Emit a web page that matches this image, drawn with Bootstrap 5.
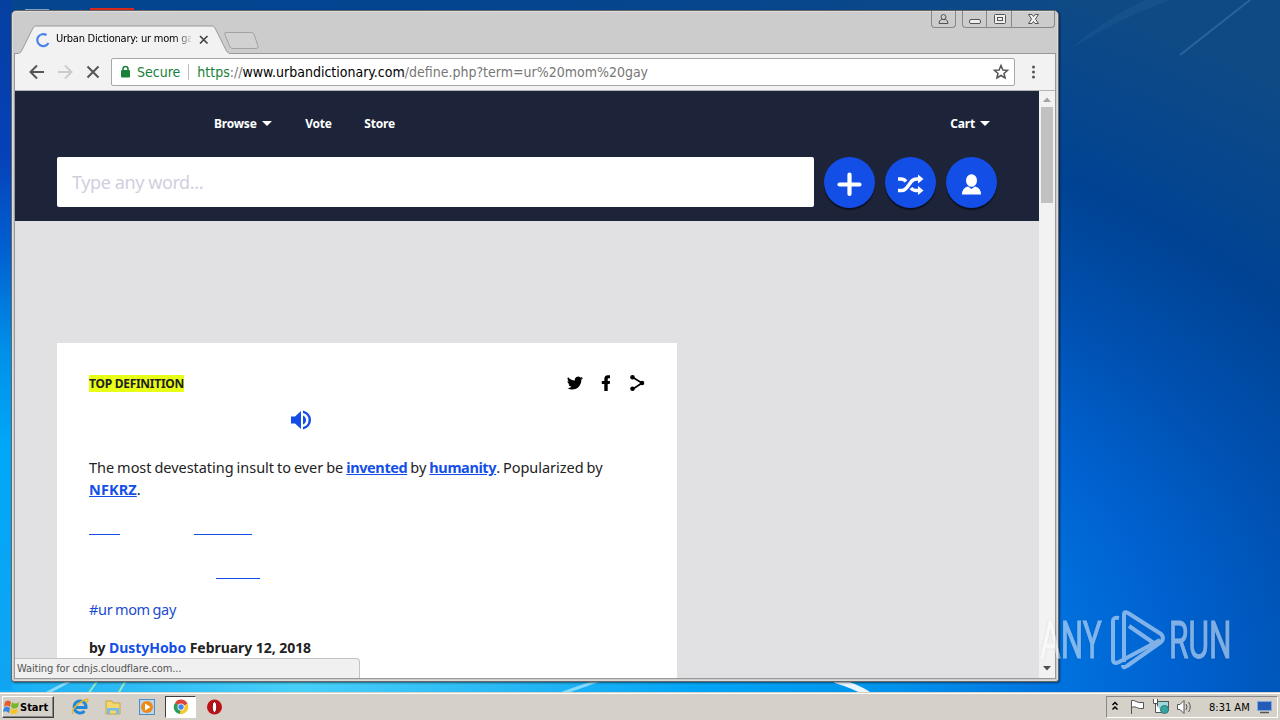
<!DOCTYPE html>
<html lang="en">
<head>
  <meta charset="UTF-8">
  <meta name="viewport" content="width=device-width, initial-scale=1.0">
  <title>Urban Dictionary: ur mom gay</title>
  <link href="https://cdn.jsdelivr.net/npm/bootstrap@5.3.0/dist/css/bootstrap.min.css" rel="stylesheet">
  <style>
    body {
      width: 1280px;
      height: 720px;
      overflow: hidden;
      font-family: "Noto Sans", "Open Sans", sans-serif;
      color: #222;
    }
    svg { display: block; flex: none; }
    .ui { font-family: "DejaVu Sans Condensed", "DejaVu Sans", sans-serif; white-space: nowrap; }
    .desktop {
      height: 720px;
      background:
        linear-gradient(#0540a0 0, #0640b8 150px, #0060d0 250px, #0090e8 350px, #00a8f8 450px, #10a4f2 690px) 0 0 / 12px 690px no-repeat,
        radial-gradient(ellipse 1150px 620px at 300px 690px, #48d0f8 0, #28b8f4 18%, #00a4f6 35%, #0092ec 52%, #0074e0 65%, #0062d0 76%, #0050b0 90%, #004394 105%, #0f4a85 130%);
    }
    .wallpaper { position: absolute; left: 0; top: 0; }

    /* browser window */
    .browser {
      position: absolute;
      left: 11px;
      top: 10px;
      width: 1048px;
      height: 672px;
      background: #ccc;
      border: 1px solid #666;
      border-radius: 5px 5px 3px 3px;
      box-shadow: inset 0 0 0 1px #ddd, 1px 1px 2px rgba(0, 0, 0, .5);
    }
    .title-bar { height: 42px; padding-right: 3px; }
    .win-controls { gap: 6px; }
    .tab-strip { position: relative; margin-left: 2px; height: 43px; }
    .tab-label { position: absolute; left: 0; top: 19px; height: 18px; padding-left: 42px; }
    .tab-label svg { position: relative; top: 1px; }
    .tab-spinner { position: absolute; left: 21px; top: 21px; }
    .tab-title {
      width: 135px;
      font-size: 11px;
      color: #000;
      letter-spacing: -.25px;
      -webkit-mask-image: linear-gradient(90deg, #000 88%, rgba(0, 0, 0, .15));
      mask-image: linear-gradient(90deg, #000 88%, rgba(0, 0, 0, .15));
    }
    .win-btns { height: 17px; border: 1px solid #888; border-top: 0; border-radius: 0 0 4px 4px; }
    .win-btns > span { border-left: 1px solid #888; }
    .win-btns > span:first-child { border-left: 0; }
    .frame { margin: 0 2px; border: 1px solid #999; height: 626px; background: #f2f2f2; }
    .toolbar { height: 37px; border-bottom: 1px solid #b5b5b5; padding-left: 14px; }
    .omnibox { width: 904px; height: 28px; border: 1px solid #a8a8a8; border-radius: 2px; font-size: 14px; color: #000; }
    .omnibox .vr { height: 16px; align-self: center; }
    .secure { color: #188038; }
    .muted { color: #777; }
    .page { width: 1024px; height: 587px; background: #e1e1e4; overflow: hidden; position: relative; }
    .scroll-thumb { width: 12px; height: 96px; background: #c1c1c1; margin: 0 2px; }
    .status {
      position: absolute;
      left: 0;
      bottom: 0;
      width: 345px;
      height: 20px;
      padding-left: 2px;
      font-size: 11px;
      line-height: 19px;
      letter-spacing: -.13px;
      color: #555;
      background: #f0f0f0;
      border: solid #c4c4c4;
      border-width: 1px 1px 0 0;
      border-radius: 0 4px 0 0;
    }

    /* site */
    .site-head { height: 130px; background: #1d2439; padding: 0 42px; }
    .site-nav { height: 66px; padding-left: 157px; padding-right: 6px; font-size: 12px; font-weight: 700; letter-spacing: -.2px; color: #fff; }
    .nav-gap { margin-left: 32.5px; }
    .word-box { width: 757px; height: 50px; padding-left: 15px; background: #fff; border-radius: 2px; font-size: 18px; letter-spacing: -.4px; color: #cfcfde; }
    .round-btns { gap: 10px; margin-left: 10px; }
    .round-btn { width: 51px; height: 51px; border-radius: 50%; background: #134fe7; box-shadow: 0 2px 1px #0c1020; }
    .definition { width: 620px; height: 340px; margin: 122px 0 0 42px; padding: 32px; background: #fff; }
    .ribbon { height: 17px; line-height: 17px; background: #e8ff17; font-size: 12px; font-weight: 700; letter-spacing: -.27px; color: #222; }
    .sound { margin: 14px 0 0 200px; }
    .meaning { margin-top: 23px; font-size: 14.5px; line-height: 22px; letter-spacing: -.04px; white-space: nowrap; word-spacing: -.7px; }
    .meaning a, .author a { color: #134fe7; font-weight: 700; }
    .meaning a { letter-spacing: -.4px; }
    .meaning .name-link { letter-spacing: .1px; }
    .blank-links { margin-top: 34px; gap: 74px; }
    .blank-link { width: 31px; height: 1px; background: #134fe7; }
    .blank-link.wide { width: 58px; }
    .blank-link.single { width: 44px; margin: 43px 0 0 127px; }
    .hash { margin-top: 19px; font-size: 14.5px; line-height: 22px; letter-spacing: -.35px; word-spacing: -.7px; color: #1b4bd0; }
    .author { margin-top: 17px; font-size: 14px; font-weight: 700; line-height: 22px; letter-spacing: -.05px; color: #222; }

    /* watermark */
    .anyrun { position: absolute; left: 1040px; top: 609px; width: 192px; height: 64px; opacity: .5; color: #fff; font-family: Roboto, sans-serif; font-size: 51px; line-height: 64px; }
    .anyrun span { position: absolute; top: 0; transform-origin: 0 0; transform: scaleX(.62); -webkit-text-stroke: 1px #fff; text-shadow: 0 0 3px rgba(0, 0, 0, .35); }
    .anyrun .run-word { left: 129px; transform: scaleX(.62); }
    .anyrun svg { position: absolute; left: 68px; top: 0; }

    /* taskbar */
    .taskbar { position: absolute; left: 0; bottom: 0; width: 1280px; height: 28px; background: #d5d0c8; border-top: 1px solid #d5d0c8; box-shadow: inset 0 1px #fff; padding: 2px 2px 2px 2px; color: #000; font-size: 11px; }
    .start { width: 52px; height: 22px; border: 1px solid; border-color: #fff #404040 #404040 #fff; box-shadow: inset -1px -1px #888; font-weight: 700; }
    .quick-launch { margin-left: 17px; }
    .task-active { width: 31px; height: 22px; background: #fff; border: 1px solid; border-color: #404040 #fff #fff #404040; }
    .tray { width: 172px; height: 22px; border: 1px solid; border-color: #888 #fff #fff #888; }
  </style>
</head>
<body>
  <div class="desktop">
    <svg class="wallpaper" width="1280" height="720">
      <path d="M90 8h44v3h-44z" fill="#d8281c"/>
      <path d="M25 9.500h24" stroke="#8aa6cc"/>
      <path d="M1180 55L1250 0" stroke="#6c9cd0" stroke-opacity=".3" stroke-width="2"/>
      <path d="M1072 48Q1120 18 1170 0H1145Q1100 22 1072 48" fill="#4b86c4" fill-opacity=".12"/>
      <path d="M45 694L72 680M560 694L600 680" stroke="#b8ecff" stroke-width="3" stroke-opacity=".7"/>
      <path d="M88 694L98 680M118 694L126 680" stroke="#b5f0b0" stroke-width="2" stroke-opacity=".8"/>
      <path d="M835 680Q855 686 868 694" stroke="#fff" stroke-width="6" fill="none" stroke-opacity=".9"/>
    </svg>

    <div class="browser">
      <div class="title-bar d-flex justify-content-between">
        <div class="tab-strip">
          <svg width="250" height="43" fill="none">
            <path d="M0 43V42H4Q7 42 8 39L19 17Q20 15 22 15H198Q200 15 201 17L212 39Q213 42 216 42V43z" fill="#f2f2f2"/>
            <path d="M0 42.500H4Q7 42 8 39L19 17Q20 15 22 15H198Q200 15 201 17L212 39Q213 42 216 42.500" stroke="#999"/>
            <path d="M212 21.500H237Q239 21.500 240 23L244 35Q245 37.500 242 37.500H219Q217 37.500 216 36L211 24Q210 21.500 212 21.500z" fill="#d1d1d1" stroke="#a3a3a3"/>
          </svg>
          <svg class="tab-spinner" width="16" height="16"><path d="M11.500 3A6 6 0 1 0 13.500 11" fill="none" stroke="#4a83ee" stroke-width="2.200"/></svg>
          <div class="tab-label ui d-flex align-items-center">
            <div class="tab-title">Urban Dictionary: ur mom ga</div>
            <svg class="ms-2" width="10" height="10"><path d="M1 1L8.500 8.500M8.500 1L1 8.500" stroke="#444" stroke-width="1.700"/></svg>
          </div>
        </div>
        <div class="win-controls d-flex">
          <div class="win-btns d-flex"><span><svg width="23" height="16" fill="none" stroke="#555"><circle cx="11.500" cy="6" r="2.500"/><path d="M7 12.500Q7 9 9.500 8.500H13.500Q16 9 16 12.500z"/></svg></span></div>
          <div class="win-btns d-flex">
            <span><svg width="23" height="16"><rect x="6.500" y="8.500" width="11" height="4" rx="1.500" fill="#eee" stroke="#555"/></svg></span>
            <span><svg width="24" height="16" fill="#eee" stroke="#555"><rect x="7.500" y="3.500" width="11" height="9" rx="1"/><rect x="10.500" y="6.500" width="5" height="3"/></svg></span>
            <span><svg width="42" height="16"><path transform="translate(1)" d="M15.500 3.500H19L20.500 5.500 22 3.500H25.500L22.500 8 25.500 12.500H22L20.500 10.500 19 12.500H15.500L18.500 8z" fill="#eee" stroke="#555"/></svg></span>
          </div>
        </div>
      </div>

      <div class="frame">
        <div class="toolbar d-flex align-items-center">
          <svg width="82" height="18" fill="none" stroke-width="2">
            <path d="M15 9H2M8 2.500L1.500 9L8 15.500" stroke="#555"/>
            <path d="M29 9H42M36 2.500L42.500 9L36 15.500" stroke="#ccc"/>
            <path d="M58.500 3.500L69.500 14.500M69.500 3.500L58.500 14.500" stroke="#555"/>
          </svg>
          <div class="omnibox bg-white d-flex align-items-center ui">
            <svg width="25" height="16"><rect x="9" y="6" width="9" height="7.500" rx="1" fill="#188038"/><path d="M11 7V5a2.500 2.500 0 0 1 5 0V7" fill="none" stroke="#188038" stroke-width="1.500"/></svg>
            <span class="secure">Secure</span>
            <span class="vr mx-2"></span>
            <span><span class="secure">https</span><span class="muted">://</span>www.urbandictionary.com<span class="muted">/define.php?term=ur%20mom%20gay</span></span>
            <svg class="ms-auto me-1" width="18" height="18"><path d="M9 2.500L10.900 7 15.500 7.300 12 10.400 13.100 15 9 12.500 4.900 15 6 10.400 2.500 7.300 7.100 7z" fill="none" stroke="#555" stroke-width="1.500"/></svg>
          </div>
          <svg class="ms-3" width="6" height="16" fill="#555"><circle cx="2.500" cy="3" r="1.500"/><circle cx="2.500" cy="8" r="1.500"/><circle cx="2.500" cy="13" r="1.500"/></svg>
        </div>

        <div class="d-flex">
          <div class="page">
            <div class="site-head">
              <div class="site-nav d-flex align-items-center">
                <span>Browse</span>
                <svg class="ms-1" width="12" height="6"><path d="M1 0H11L6 5z" fill="#fff"/></svg>
                <span class="nav-gap">Vote</span>
                <span class="nav-gap">Store</span>
                <span class="ms-auto">Cart</span>
                <svg class="ms-1" width="12" height="6"><path d="M1 0H11L6 5z" fill="#fff"/></svg>
              </div>
              <div class="d-flex">
                <div class="word-box d-flex align-items-center">Type any word...</div>
                <div class="round-btns d-flex">
                  <div class="round-btn"><svg width="51" height="51"><path d="M25.500 17.500V37M15.500 27.500H35.500" stroke="#fff" stroke-width="4.200" stroke-linecap="round"/></svg></div>
                  <div class="round-btn"><svg width="51" height="51" fill="none" stroke="#fff" stroke-width="3.500"><path d="M13 22H16Q19 22 21 24.500M13 33.500H17Q20 33.500 23 29L26 25Q28 22 32 22H34M26 31Q28 33.500 31 33.500H34"/><path d="M33 17.500L38.500 22 33 26.500zM33 29L38.500 33.500 33 38z" fill="#fff" stroke="none"/></svg></div>
                  <div class="round-btn"><svg width="51" height="51" fill="#fff"><ellipse cx="25.500" cy="23.500" rx="5.500" ry="6.300"/><path d="M16 37.500Q16 31 22 29.500L25.500 32 29 29.500Q35 31 35 37.500z"/></svg></div>
                </div>
              </div>
            </div>
            <div class="definition">
              <div class="d-flex justify-content-between">
                <span class="ribbon">TOP DEFINITION</span>
                <svg width="80" height="18">
                  <path transform="translate(1 -.5)" d="M17 3.500c-.6.300-1.200.5-1.900.5.700-.4 1.200-1 1.400-1.800-.6.400-1.300.7-2.100.8A3.300 3.300 0 0 0 8.800 6C6 5.900 3.600 4.500 2 2.500c-.9 1.500-.4 3.400 1 4.400-.5 0-1-.2-1.500-.4 0 1.600 1.100 3 2.600 3.300-.5.100-1 .1-1.500.1.400 1.300 1.600 2.200 3.100 2.300C4.300 13.300 2.500 13.800 1 13.600c1.500.9 3.200 1.500 5 1.500 6.200 0 9.500-5.200 9.300-9.800.7-.5 1.200-1.100 1.700-1.800z"/>
                  <path d="M39.300 16V9H36.800V6H39.300V4.500Q39.300.3 42.800.3h2.200v2.900H43.600Q42.700 3.200 42.700 4.300V6h2.300L44.700 9H42.700v7z"/>
                  <path d="M68 2.500L77 8 68 14" fill="none" stroke="#000" stroke-width="1.600"/><circle cx="67.500" cy="2.300" r="2.300"/><circle cx="77" cy="8" r="2.300"/><circle cx="67.500" cy="13.800" r="2.300"/>
                </svg>
              </div>
              <svg class="sound" width="26" height="26" fill="#134fe7"><path d="M2 9.500H6L12 4V22L6 16.500H2zM14 8.500Q17 10 17 13T14 17.500z"/><path d="M14 3.500Q22 6 22 13T14 22.500V20Q19.500 18.500 19.500 13T14 6z"/></svg>
              <div class="meaning">
                The most devestating insult to ever be <a href="#">invented</a> by <a href="#">humanity</a>. Popularized by<br>
                <a href="#" class="name-link">NFKRZ</a>.
              </div>
              <div class="blank-links d-flex"><span class="blank-link"></span><span class="blank-link wide"></span></div>
              <div class="blank-link single"></div>
              <div class="hash">#ur mom gay</div>
              <div class="author">by <a href="#" class="text-decoration-none">DustyHobo</a> February 12, 2018</div>
            </div>
            <div class="status ui">Waiting for cdnjs.cloudflare.com...</div>
          </div>
          <div class="d-flex flex-column">
            <svg width="16" height="16"><path d="M4 11H12L8 6.500z" fill="#a3a3a3"/></svg>
            <div class="scroll-thumb"></div>
            <svg class="mt-auto" width="16" height="18"><path d="M4 6H12L8 10.500z" fill="#505050"/></svg>
          </div>
        </div>
      </div>
    </div>

    <div class="anyrun">
      <span>ANY</span>
      <svg width="60" height="64" fill="none" stroke="#fff" stroke-width="4" stroke-linejoin="round">
        <path d="M11 9Q5 8 5 12V50Q5 56 11 53L52 31"/><path d="M16 53V5Q16 2 20 4L53 25Q57 29 53 33L19 57Q15 60 15 56M21 17L50 37"/>
      </svg>
      <span class="run-word">RUN</span>
    </div>

    <div class="taskbar ui d-flex align-items-center">
      <div class="start d-flex align-items-center">
        <svg width="17" height="18"><path d="M2 4Q5 1 8 4L7 9Q4 6 1 9z" fill="#e85b28"/><path d="M9 4Q12 7 16 4L15 9Q11 12 8 9z" fill="#76b82a"/><path d="M1 10Q4 7 7 10L6 15Q3 12 0 14z" fill="#3a86dc"/><path d="M8 10Q11 13 15 10L14 15Q10 17 7 15z" fill="#f8c420"/></svg>
        <span class="pt-1">Start</span>
      </div>
      <svg class="quick-launch" width="94" height="20" fill="none">
        <path d="M13.500 14A6 6 0 1 1 15 10.500H4" stroke="#2187d8" stroke-width="3"/><path d="M2 17Q0 14 5 9T16 2Q18 4 15 6" stroke="#e9b827" stroke-width="1.500"/>
        <path d="M35 4H41L42 6H49V17H35z" fill="#f3d66c" stroke="#c9a542"/><path d="M36 17V11H48V17H45V13.500H39V17z" fill="#78bce8"/>
        <rect x="68.500" y="2.500" width="15" height="15" fill="#b6d7f1" stroke="#518cc0"/><circle cx="76" cy="10" r="6" fill="#f08818"/><path d="M74 6.500V13.500L79.500 10z" fill="#fff"/>
      </svg>
      <div class="task-active d-flex justify-content-center align-items-center">
        <svg width="16" height="16"><path d="M8 8L2 4A7 7 0 0 1 14.500 5z" fill="#dc4437"/><path d="M8 8L14.500 5A7 7 0 0 1 7 15z" fill="#f8c927"/><path d="M8 8L7 15A7 7 0 0 1 2 4z" fill="#2c9d58"/><circle cx="8" cy="8" r="3.500" fill="#fff"/><circle cx="8" cy="8" r="2.700" fill="#4684f0"/></svg>
      </div>
      <svg class="ms-2" width="24" height="18"><circle cx="10.500" cy="9" r="7.500" fill="#bd1118"/><ellipse cx="10.500" cy="9" rx="2.300" ry="5.500" fill="#fff" stroke="#7b080c"/></svg>
      <div class="tray d-flex align-items-center ms-auto">
        <svg width="102" height="20" fill="none" stroke="#555">
          <path d="M5.500 8L8 5.500 10.500 8M5.500 12.500L8 10 10.500 12.500" stroke="#000" stroke-width="1.500"/>
          <path d="M24.500 17V3.500Q27 3 29 4.500T36.500 5.500V11.500Q32 12 29.500 10.500T24.500 10.500" fill="#fff"/>
          <rect x="50.500" y="4.500" width="11" height="9" fill="#9fd8d8"/><path d="M46.500 2V6.500H50.500V2M48.500 6.500V15.500H55" fill="#fff"/><circle cx="57.500" cy="12.500" r="4" fill="#35a5a0" stroke="#377"/>
          <path d="M70.500 7.500H73L77 3.500V16.500L73 12.500H70.500z" fill="#fff"/><path d="M79 7Q81 10 79 13M81.500 5Q85 10 81.500 15"/>
        </svg>
        <span class="pt-1">8:31 AM</span>
        <svg class="ms-auto me-1" width="16" height="16"><rect x=".5" y="2.500" width="14" height="9" fill="#245bb8" stroke="#7fa8dc"/><path d="M3 13.500H12" stroke="#555" stroke-width="1.500"/></svg>
      </div>
    </div>
  </div>
  <script src="https://cdn.jsdelivr.net/npm/bootstrap@5.3.0/dist/js/bootstrap.bundle.min.js"></script>
</body>
</html>
